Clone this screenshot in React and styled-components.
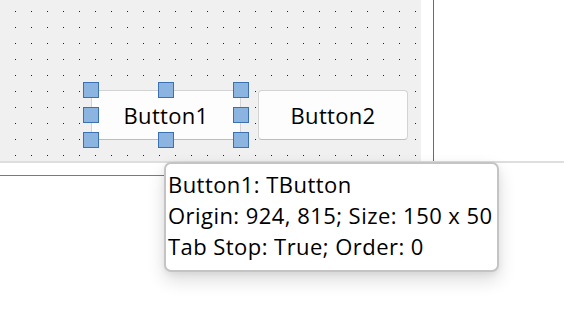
import React from "react";
import styled, { createGlobalStyle } from "styled-components";

const Global = createGlobalStyle`
  html, body { margin: 0; padding: 0; background: #ffffff; }
  body { font-family: "Open Sans", "Noto Sans", sans-serif; overflow: hidden; }
`;

const Page = styled.div`
  position: relative;
  width: 564px;
  height: 314px;
  background: #ffffff;
  overflow: hidden;
`;

const TopRow = styled.div`
  display: flex;
  height: 161px;
`;

const Canvas = styled.div`
  display: flex;
  align-items: flex-start;
  gap: 17px;
  box-sizing: border-box;
  width: 421px;
  height: 100%;
  padding: 90px 0 0 91px;
  background-color: #f0f0f0;
  background-image: conic-gradient(from 270deg at 1px 1px, #1e1e1e 90deg, transparent 0);
  background-size: 16px 16px;
  background-position: 15px 11px;
`;

const FrameEdge = styled.div`
  width: 12px;
  height: 100%;
  border-right: 1px solid #6a6a6a;
`;

const Strip = styled.div`
  height: 2px;
  background: #dedede;
`;

const FormEdge = styled.div`
  margin-top: 12px;
  width: 434px;
  height: 1px;
  background: #7a7a7a;
`;

const Selection = styled.div`
  position: relative;
  display: flex;
`;

const DesignButton = styled.div`
  width: 150px;
  height: 50px;
  box-sizing: border-box;
  display: flex;
  align-items: center;
  justify-content: center;
  background: #fdfdfd;
  border: 1px solid #d3d3d3;
  border-bottom-color: #bdbdbd;
  border-radius: 4px;
  font-family: "Open Sans", "Noto Sans", sans-serif;
  font-size: 22px;
  letter-spacing: 0.3px;
  color: #000;
`;

const Handle = styled.div`
  position: absolute;
  left: ${(p) => p.$x - 8}px;
  top: ${(p) => p.$y - 8}px;
  width: 16px;
  height: 16px;
  box-sizing: border-box;
  background: #8cb4e1;
  border: 1.5px solid #3b71b2;
`;

const Tooltip = styled.div`
  position: absolute;
  left: 164px;
  top: 162px;
  width: 335px;
  height: 110px;
  box-sizing: border-box;
  padding: 5px 0 0 2px;
  background: #ffffff;
  border: 2px solid #c4c4c4;
  border-radius: 7px;
  box-shadow: 0 8px 18px rgba(0, 0, 0, 0.14), 0 2px 6px rgba(0, 0, 0, 0.06);
  font-family: "Open Sans", "Noto Sans", sans-serif;
  font-size: 22px;
  letter-spacing: 0.45px;
  line-height: 31px;
  color: #000;
  white-space: nowrap;
`;

const Line = styled.div``;

const handles = [
  [0, 0], [75, 0], [150, 0],
  [0, 25], [150, 25],
  [0, 50], [75, 50], [150, 50],
];

export default function App() {
  return (
    <Page>
      <Global />
      <TopRow>
        <Canvas>
          <Selection>
            <DesignButton>Button1</DesignButton>
            {handles.map(([x, y]) => (
              <Handle key={`${x}-${y}`} $x={x} $y={y} />
            ))}
          </Selection>
          <DesignButton>Button2</DesignButton>
        </Canvas>
        <FrameEdge />
      </TopRow>
      <Strip />
      <FormEdge />
      <Tooltip>
        <Line>Button1: TButton</Line>
        <Line>Origin: 924, 815; Size: 150 x 50</Line>
        <Line>Tab Stop: True; Order: 0</Line>
      </Tooltip>
    </Page>
  );
}
